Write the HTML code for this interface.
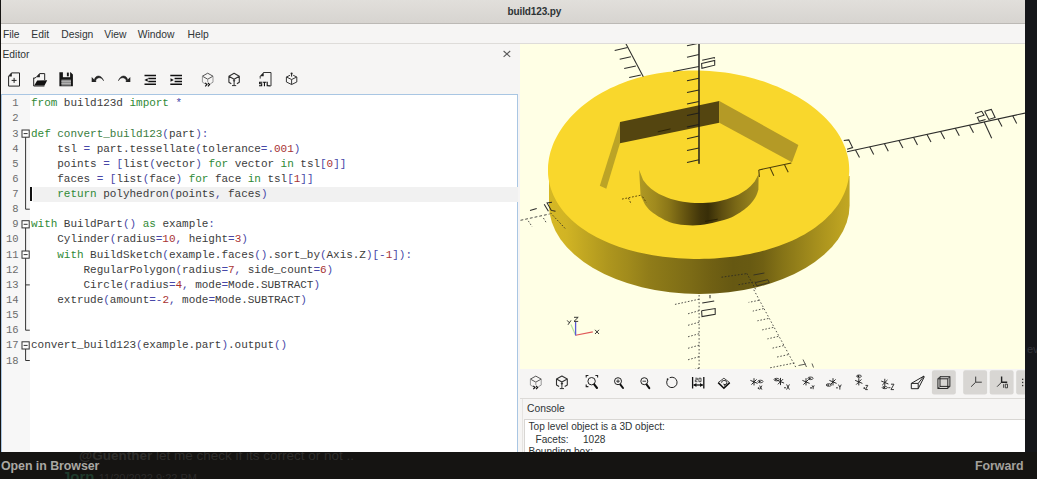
<!DOCTYPE html>
<html><head><meta charset="utf-8">
<style>
html,body{margin:0;padding:0;background:#151412;}
body{width:1037px;height:479px;position:relative;overflow:hidden;font-family:"Liberation Sans",sans-serif;}
.abs{position:absolute;}
#win{left:1px;top:0;width:1024px;height:452px;background:#f6f5f4;overflow:hidden;}
#title{left:0;top:0;width:1024px;height:23px;background:linear-gradient(#e1dfdb,#d7d4d0);border-bottom:1px solid #bcb9b5;}
#title span{position:absolute;left:506.5px;top:5.5px;font-weight:700;font-size:10px;color:#2e3436;letter-spacing:-0.12px;line-height:12px;white-space:pre;}
#menu{left:0;top:24px;width:1024px;height:19px;background:#f6f5f4;border-bottom:1px solid #dedcd9;}
.mi{position:absolute;top:28.5px;font-size:10.3px;line-height:12px;color:#2e3436;white-space:pre;}
#code{left:0;top:94px;width:517px;height:358px;background:#fff;border:1px solid #a9c6e3;border-bottom:none;box-sizing:border-box;}
#gutter{left:1px;top:95px;width:28px;height:357px;background:#f7f7f7;}
.ln{position:absolute;left:0;width:17.5px;text-align:right;font-family:"Liberation Mono",monospace;font-size:10.5px;line-height:15px;color:#6c6c6c;white-space:pre;}
.cl{position:absolute;left:30px;font-family:"Liberation Mono",monospace;font-size:11px;line-height:15px;color:#3c3c3c;white-space:pre;letter-spacing:-0.035px;}
.k{color:#2f8a36;}
.f{color:#3a7d40;}
.o{color:#4848a8;}
.n{color:#a83232;}
#view{left:519px;top:44px;width:505px;height:325px;background:#ffffe5;overflow:hidden;}
#vtb{left:519px;top:369px;width:505px;height:29px;background:#f6f5f4;}
#cons{left:523px;top:419px;width:501px;height:33px;background:#fff;border-top:1px solid #d8d6d3;border-left:1px solid #d8d6d3;}
.ct{position:absolute;font-size:10.1px;line-height:12px;color:#2e3436;white-space:pre;}
#bottom{left:0;top:452px;width:1037px;height:27px;background:#151412;overflow:hidden;}
#right{left:1025px;top:0;width:12px;height:452px;background:#15161a;}
</style></head><body>
<div id="win" class="abs">
<div id="title" class="abs"><span>build123.py</span></div>
<div id="menu" class="abs"></div>
<span class="mi" style="left:2px">File</span>
<span class="mi" style="left:30.3px">Edit</span>
<span class="mi" style="left:60.3px">Design</span>
<span class="mi" style="left:103.3px">View</span>
<span class="mi" style="left:136.8px">Window</span>
<span class="mi" style="left:186.5px">Help</span>
<span class="mi" style="left:1.5px;top:49px">Editor</span>
<!--ICONS-->
<svg width="520" height="50" viewBox="1 44 520 50" style="position:absolute;left:0;top:44px"><path d="M11.6,72.9 L19.5,72.9 L19.5,86.1 L8.6,86.1 L8.6,76.2 Z" fill="none" stroke="#222" stroke-width="1"/><path d="M8.3,76.4 L11.8,72.6 L11.8,76.4 Z" fill="#222"/><path d="M11.6,80.4 h5 M14.1,77.9 v5" stroke="#222" stroke-width="1" fill="none"/>
<path d="M36.6,77 L39.7,73.6 L44.7,73.6 L44.7,80" fill="none" stroke="#222" stroke-width="1"/><path d="M36.2,77.3 L39.9,73.2 L39.9,77.3 Z" fill="#222"/><path d="M33.7,77.6 L33.7,86 L44.4,86" fill="none" stroke="#222" stroke-width="1"/><path d="M36.2,77.3 L33.7,78.5" stroke="#222" stroke-width="1"/><polygon points="37.2,80.6 47.2,80.3 44.5,85.6 34.2,85.6" fill="#111"/>
<path d="M59.4,72.3 L70.6,72.3 L72.9,74.6 L72.9,86.2 L59.4,86.2 Z" fill="#161616"/><rect x="62.9" y="72" width="7.2" height="5.2" fill="#f3f2f1"/><rect x="66.9" y="72.6" width="1.9" height="3.7" fill="#161616"/><rect x="61.4" y="79.6" width="9.6" height="6" fill="#8a8a8a"/><path d="M61.4,81.3 h9.6 M61.4,83.4 h9.6" stroke="#c8c8c8" stroke-width="0.7"/>
<path d="M94.2,80.2 C95.2,74.6 101.6,74.4 103.6,80.8 C101.4,76.6 96.6,76.8 95.6,81 Z" fill="#222" stroke="#222" stroke-width="0.5"/><polygon points="91.7,77 91.7,81.9 96.6,81.9" fill="#222"/>
<path d="M127.8,80.2 C126.8,74.6 120.4,74.4 118.4,80.8 C120.6,76.6 125.4,76.8 126.4,81 Z" fill="#222" stroke="#222" stroke-width="0.5"/><polygon points="130.3,77 130.3,81.9 125.4,81.9" fill="#222"/>
<path d="M144.5,75.6 H156 M148.3,78.5 H156 M148.3,81.4 H156 M144.5,84.3 H156" stroke="#111" stroke-width="1.5" fill="none"/><polygon points="144.4,80 147.7,78.2 147.7,81.8" fill="#111"/>
<path d="M170.3,75.6 H182 M174.6,78.5 H182 M174.6,81.4 H182 M170.3,84.3 H182" stroke="#111" stroke-width="1.5" fill="none"/><polygon points="173.8,80 170.5,78.2 170.5,81.8" fill="#111"/>
<path d="M202.39999999999998,76.2 L207.7,73.2 L213.0,76.2 L207.7,79.2 Z" fill="none" stroke="#444" stroke-width="0.9" stroke-linejoin="round"/><path d="M202.39999999999998,76.2 V82.2 L205.2,83.8 M213.0,76.2 V82.2 L210.29999999999998,83.8 M207.7,79.2 V82.2" fill="none" stroke="#8c8c8c" stroke-width="0.9"/>
<path d="M205.2,82.9 l1.7,1.7 l-1.7,1.7 M207.9,82.9 l1.7,1.7 l-1.7,1.7" fill="none" stroke="#111" stroke-width="1.15"/>
<path d="M228.9,76.2 L234.1,73.2 L239.29999999999998,76.2 L234.1,79.2 Z M228.9,76.2 V82.2 L231.29999999999998,83.7 M239.29999999999998,76.2 V82.2 L236.9,83.7" fill="none" stroke="#303030" stroke-width="1.1" stroke-linejoin="round"/>
<path d="M232.7,80.2 H235.5 L234.1,82.0 Z" fill="#303030"/><path d="M234.1,79.2 V85.4 M232.0,85.60000000000001 H236.2" stroke="#303030" stroke-width="1" fill="none"/>
<path d="M263.4,72.5 H271 V85.9 H268.6" fill="none" stroke="#333" stroke-width="1"/><path d="M259.7,76.2 L263.7,72.1 L263.7,76.2 Z" fill="#222"/><path d="M260.2,76 V78.6" stroke="#333" stroke-width="1"/>
<path d="M262,82.2 H259.6 V83.8 H261.7 V85.8 H259" fill="none" stroke="#111" stroke-width="1.05"/><path d="M262.6,82.2 H266.3 M264.45,82.2 V86.3" fill="none" stroke="#111" stroke-width="1.1"/><path d="M267.2,81.7 V85.8 H269.7" fill="none" stroke="#111" stroke-width="1.1"/>
<path d="M290.0,75.3 L286.40000000000003,77.0 L291.6,79.5 L296.8,77.0 L293.20000000000005,75.3 M286.40000000000003,77.0 V82.0 L291.6,84.5 L296.8,82.0 V77.0 M291.6,79.5 V84.5" fill="none" stroke="#383838" stroke-width="1" stroke-linejoin="round"/>
<path d="M291.6,73.4 V76.6" stroke="#222" stroke-width="1"/><circle cx="291.6" cy="73.5" r="1.05" fill="#222"/>
<path d="M503.6,51 L510.2,56.8 M510.2,51 L503.6,56.8" stroke="#5a5a5a" stroke-width="1.1" fill="none"/></svg>
<!--/ICONS-->
<div id="code" class="abs"></div>
<div id="gutter" class="abs"></div>
<!--CODE-->
<div class="abs" style="left:32px;top:186.9px;width:485px;height:15.2px;background:#f1f1f1"></div><div class="abs" style="left:29.4px;top:186.9px;width:1.6px;height:14.6px;background:#111"></div>
<span class="ln" style="top:96.30px">1</span>
<span class="cl" style="top:96.30px"><span class="k">from</span> build123d <span class="k">import</span> <span class="o">*</span></span>
<span class="ln" style="top:111.43px">2</span>
<span class="ln" style="top:126.56px">3</span>
<span class="cl" style="top:126.56px"><span class="k">def</span> <span class="f">convert_build123</span><span class="o">(</span>part<span class="o">)</span><span class="o">:</span></span>
<span class="ln" style="top:141.69px">4</span>
<span class="cl" style="top:141.69px">    tsl <span class="o">=</span> part.tessellate<span class="o">(</span>tolerance<span class="o">=</span><span class="o">.</span><span class="n">001</span><span class="o">)</span></span>
<span class="ln" style="top:156.82px">5</span>
<span class="cl" style="top:156.82px">    points <span class="o">=</span> <span class="o">[</span>list<span class="o">(</span>vector<span class="o">)</span> <span class="k">for</span> vector <span class="k">in</span> tsl<span class="o">[</span><span class="n">0</span><span class="o">]</span><span class="o">]</span></span>
<span class="ln" style="top:171.95px">6</span>
<span class="cl" style="top:171.95px">    faces <span class="o">=</span> <span class="o">[</span>list<span class="o">(</span>face<span class="o">)</span> <span class="k">for</span> face <span class="k">in</span> tsl<span class="o">[</span><span class="n">1</span><span class="o">]</span><span class="o">]</span></span>
<span class="ln" style="top:187.08px">7</span>
<span class="cl" style="top:187.08px">    <span class="k">return</span> polyhedron<span class="o">(</span>points<span class="o">,</span> faces<span class="o">)</span></span>
<span class="ln" style="top:202.21px">8</span>
<span class="ln" style="top:217.34px">9</span>
<span class="cl" style="top:217.34px"><span class="k">with</span> BuildPart<span class="o">(</span><span class="o">)</span> <span class="k">as</span> example<span class="o">:</span></span>
<span class="ln" style="top:232.47px">10</span>
<span class="cl" style="top:232.47px">    Cylinder<span class="o">(</span>radius<span class="o">=</span><span class="n">10</span><span class="o">,</span> height<span class="o">=</span><span class="n">3</span><span class="o">)</span></span>
<span class="ln" style="top:247.60px">11</span>
<span class="cl" style="top:247.60px">    <span class="k">with</span> BuildSketch<span class="o">(</span>example.faces<span class="o">(</span><span class="o">)</span>.sort_by<span class="o">(</span>Axis.Z<span class="o">)</span><span class="o">[</span><span class="o">-</span><span class="n">1</span><span class="o">]</span><span class="o">)</span><span class="o">:</span></span>
<span class="ln" style="top:262.73px">12</span>
<span class="cl" style="top:262.73px">        RegularPolygon<span class="o">(</span>radius<span class="o">=</span><span class="n">7</span><span class="o">,</span> side_count<span class="o">=</span><span class="n">6</span><span class="o">)</span></span>
<span class="ln" style="top:277.86px">13</span>
<span class="cl" style="top:277.86px">        Circle<span class="o">(</span>radius<span class="o">=</span><span class="n">4</span><span class="o">,</span> mode<span class="o">=</span>Mode.SUBTRACT<span class="o">)</span></span>
<span class="ln" style="top:292.99px">14</span>
<span class="cl" style="top:292.99px">    extrude<span class="o">(</span>amount<span class="o">=</span><span class="o">-</span><span class="n">2</span><span class="o">,</span> mode<span class="o">=</span>Mode.SUBTRACT<span class="o">)</span></span>
<span class="ln" style="top:308.12px">15</span>
<span class="ln" style="top:323.25px">16</span>
<span class="ln" style="top:338.38px">17</span>
<span class="cl" style="top:338.38px">convert_build123<span class="o">(</span>example.part<span class="o">)</span>.output<span class="o">(</span><span class="o">)</span></span>
<span class="ln" style="top:353.51px">18</span>
<svg width="34" height="358" viewBox="1 94 34 358" style="position:absolute;left:0;top:94px" fill="none"><path d="M25.6,133.6 V209.2" stroke="#333" stroke-width="1"/><path d="M25.6,209.2 H29.8" stroke="#333" stroke-width="1"/><rect x="22.0" y="130.0" width="7.2" height="7.2" fill="#fff" stroke="#333" stroke-width="1"/><path d="M23.6,133.6 H27.6" stroke="#333" stroke-width="1"/><path d="M25.6,224.3 V330.2" stroke="#333" stroke-width="1"/><path d="M25.6,330.2 H29.8" stroke="#333" stroke-width="1"/><path d="M25.6,284.9 H29.8" stroke="#333" stroke-width="1"/><rect x="22.0" y="220.7" width="7.2" height="7.2" fill="#fff" stroke="#333" stroke-width="1"/><path d="M23.6,224.3 H27.6" stroke="#333" stroke-width="1"/><rect x="22.0" y="251.0" width="7.2" height="7.2" fill="#fff" stroke="#333" stroke-width="1"/><path d="M23.6,254.6 H27.6" stroke="#333" stroke-width="1"/><path d="M25.6,345.4 V360.5" stroke="#333" stroke-width="1"/><path d="M25.6,360.5 H29.8" stroke="#333" stroke-width="1"/><rect x="22.0" y="341.8" width="7.2" height="7.2" fill="#fff" stroke="#333" stroke-width="1"/><path d="M23.6,345.4 H27.6" stroke="#333" stroke-width="1"/></svg>
<!--/CODE-->
<div id="view" class="abs">
<!--SVG-->
<svg width="505" height="325" viewBox="520 44 505 325" style="position:absolute;left:0;top:0"><defs><linearGradient id="gs" gradientUnits="userSpaceOnUse" x1="549" y1="0" x2="849.6" y2="0"><stop offset="0.0000" stop-color="#d6b825"/><stop offset="0.0566" stop-color="#d1b424"/><stop offset="0.1264" stop-color="#bfa521"/><stop offset="0.1963" stop-color="#ae961e"/><stop offset="0.2628" stop-color="#a18b1c"/><stop offset="0.3327" stop-color="#907c19"/><stop offset="0.4025" stop-color="#867417"/><stop offset="0.4724" stop-color="#7c6b16"/><stop offset="0.5422" stop-color="#706013"/><stop offset="0.6121" stop-color="#665812"/><stop offset="0.6687" stop-color="#685a12"/><stop offset="0.7119" stop-color="#706013"/><stop offset="0.7784" stop-color="#867417"/><stop offset="0.8483" stop-color="#9a851b"/><stop offset="0.9182" stop-color="#ae961e"/><stop offset="0.9747" stop-color="#bda321"/><stop offset="1.0000" stop-color="#c2a722"/></linearGradient><linearGradient id="gb" gradientUnits="userSpaceOnUse" x1="639" y1="0" x2="759" y2="0"><stop offset="0.0000" stop-color="#b09a24"/><stop offset="0.1333" stop-color="#a08a1e"/><stop offset="0.2500" stop-color="#8a7618"/><stop offset="0.4167" stop-color="#5c4c0e"/><stop offset="0.5083" stop-color="#42360a"/><stop offset="0.5750" stop-color="#382e08"/><stop offset="0.6917" stop-color="#5e4e10"/><stop offset="0.8083" stop-color="#7a6816"/><stop offset="0.9167" stop-color="#8f7c1c"/><stop offset="1.0000" stop-color="#9c8820"/></linearGradient></defs>
<path fill="url(#gs)" d="M549,176 L549,205.2 A150.3,88.86 0 0 0 849.6,205.2 L849.6,176 Z"/>
<path fill="#f9d72c" d="M849.0,165.0 L849.2,168.3 L849.2,171.7 L849.0,175.0 L848.6,178.4 L848.0,181.7 L847.2,185.0 L846.2,188.3 L845.0,191.6 L843.6,194.8 L842.0,198.1 L840.2,201.2 L838.2,204.4 L836.0,207.5 L833.6,210.5 L831.1,213.4 L828.3,216.3 L825.4,219.2 L822.3,221.9 L819.0,224.6 L815.6,227.2 L812.0,229.7 L808.3,232.0 L804.4,234.4 L800.4,236.6 L796.3,238.7 L792.0,240.7 L787.7,242.6 L783.2,244.3 L778.7,246.0 L774.1,247.6 L769.3,249.1 L764.6,250.4 L759.7,251.7 L754.9,252.8 L749.9,253.9 L744.9,254.8 L739.9,255.7 L734.9,256.4 L729.8,257.1 L724.7,257.6 L719.6,258.1 L714.5,258.4 L709.3,258.7 L704.2,258.8 L699.0,258.9 L693.8,258.9 L688.7,258.8 L683.5,258.6 L678.4,258.3 L673.2,257.8 L668.1,257.3 L663.0,256.7 L657.9,256.0 L652.9,255.2 L647.8,254.3 L642.8,253.3 L637.9,252.2 L633.0,251.0 L628.2,249.7 L623.4,248.2 L618.7,246.7 L614.1,245.0 L609.6,243.2 L605.1,241.3 L600.8,239.3 L596.6,237.2 L592.6,235.0 L588.6,232.7 L584.9,230.3 L581.2,227.8 L577.8,225.2 L574.5,222.5 L571.4,219.7 L568.4,216.8 L565.7,213.9 L563.1,210.9 L560.7,207.8 L558.6,204.7 L556.6,201.6 L554.9,198.3 L553.3,195.1 L552.0,191.8 L550.8,188.5 L549.8,185.1 L549.1,181.8 L548.5,178.4 L548.1,175.1 L548.0,171.7 L548.0,168.4 L548.1,165.0 L548.5,161.7 L549.0,158.3 L549.7,155.0 L550.5,151.8 L551.6,148.5 L552.7,145.3 L554.0,142.1 L555.5,139.0 L557.1,135.9 L558.9,132.8 L560.8,129.7 L562.8,126.7 L565.0,123.8 L567.3,120.9 L569.8,118.0 L572.4,115.2 L575.2,112.4 L578.1,109.7 L581.1,107.0 L584.3,104.4 L587.6,101.9 L591.0,99.5 L594.6,97.1 L598.3,94.8 L602.2,92.5 L606.1,90.4 L610.2,88.3 L614.5,86.4 L618.8,84.5 L623.3,82.8 L627.8,81.1 L632.5,79.6 L637.3,78.1 L642.1,76.8 L647.0,75.6 L652.0,74.5 L657.1,73.6 L662.2,72.7 L667.4,72.0 L672.6,71.5 L677.9,71.0 L683.2,70.7 L688.4,70.5 L693.7,70.4 L699.0,70.5 L704.3,70.7 L709.5,71.0 L714.7,71.4 L719.9,71.9 L725.1,72.6 L730.1,73.3 L735.2,74.2 L740.2,75.2 L745.1,76.3 L749.9,77.5 L754.6,78.8 L759.3,80.2 L763.9,81.6 L768.4,83.2 L772.8,84.9 L777.1,86.6 L781.4,88.4 L785.5,90.4 L789.5,92.3 L793.4,94.4 L797.2,96.5 L800.9,98.7 L804.5,101.0 L807.9,103.3 L811.3,105.8 L814.5,108.2 L817.6,110.8 L820.6,113.4 L823.4,116.0 L826.2,118.7 L828.7,121.5 L831.2,124.3 L833.5,127.2 L835.7,130.1 L837.7,133.1 L839.6,136.1 L841.3,139.2 L842.8,142.3 L844.2,145.4 L845.5,148.6 L846.5,151.9 L847.4,155.1 L848.2,158.4 L848.7,161.7Z"/>
<polygon fill="#bca426" points="620,122 620,143.3 606.3,188.7 599.8,185.8"/>
<polygon fill="#544510" points="620,122 719.3,100.9 719.3,122.8 620,143.3"/>
<polygon fill="#b49a26" points="719.3,100.9 798.4,144.9 792,162.2 719.3,122.8"/>
<path fill="url(#gb)" d="M758.7,170.5 L758.4,189.8C757.9,191.1 757.1,194.7 755.3,197.6C753.5,200.5 751.3,203.7 747.4,207.0C743.5,210.3 737.0,214.7 731.8,217.2C726.6,219.7 721.3,220.6 716.1,221.9C710.9,223.2 705.7,224.5 700.5,225.0C695.3,225.5 690.0,225.5 684.8,225.0C679.6,224.5 674.3,223.9 669.1,221.9C663.9,219.9 657.4,215.9 653.5,213.2C649.6,210.4 647.9,208.4 645.7,205.4C643.6,202.4 641.5,196.9 640.6,195.2 L639.1,169.8 L643.1,180.1 L647.1,185.1 L651.1,188.7 L655.0,191.5 L659.0,193.9 L663.0,195.8 L667.0,197.5 L671.0,198.9 L675.0,200.0 L679.0,201.0 L683.0,201.7 L686.9,202.3 L690.9,202.7 L694.9,203.0 L698.9,203.1 L702.9,203.0 L706.9,202.8 L710.9,202.4 L714.8,201.9 L718.8,201.2 L722.8,200.3 L726.8,199.2 L730.8,197.8 L734.8,196.3 L738.8,194.4 L742.8,192.1 L746.7,189.4 L750.7,186.1 L754.7,181.6 L758.7,174.1 Z"/>
<!--AXES-->
<g stroke="#1c1c1c" stroke-width="1.05" fill="none" stroke-linecap="butt" opacity="0.92">
<line x1="699.0" y1="44" x2="699.0" y2="163.7" stroke-width="1.1"/>
<line x1="699.0" y1="44.0" x2="699.0" y2="163.7"/>
<line x1="699.0" y1="43.2" x2="687.0" y2="45.8"/>
<line x1="699.0" y1="54.6" x2="687.0" y2="57.2"/>
<line x1="699.0" y1="78.2" x2="687.0" y2="80.8"/>
<line x1="699.0" y1="90.0" x2="687.0" y2="92.6"/>
<line x1="699.0" y1="101.4" x2="687.0" y2="104.0"/>
<line x1="699.0" y1="113.0" x2="687.0" y2="115.6"/>
<line x1="699.0" y1="124.4" x2="687.0" y2="127.0"/>
<line x1="699.0" y1="136.1" x2="687.0" y2="138.7"/>
<line x1="699.0" y1="148.0" x2="687.0" y2="150.6"/>
<line x1="699.0" y1="159.8" x2="687.0" y2="162.4"/>
<line x1="699.0" y1="66.6" x2="673.2" y2="71.4"/>
<line x1="702.2" y1="60.2" x2="714.7" y2="57.4"/>
<line x1="714.7" y1="57.4" x2="714.1" y2="58.4"/>
<line x1="625.9" y1="43.7" x2="643.3" y2="76.8"/>
<line x1="627.6" y1="47.5" x2="614.7" y2="50.4"/>
<line x1="630.9" y1="56.7" x2="619.7" y2="59.2"/>
<line x1="635.9" y1="65.9" x2="624.2" y2="68.4"/>
<line x1="640.9" y1="75.0" x2="629.2" y2="77.6"/>
<line x1="847.1" y1="151.7" x2="1025.5" y2="113.0"/>
<line x1="855.5" y1="149.9" x2="859.5" y2="157.5"/>
<line x1="869.7" y1="146.8" x2="873.7" y2="154.4"/>
<line x1="884.3" y1="143.6" x2="888.3" y2="151.2"/>
<line x1="898.9" y1="140.5" x2="902.9" y2="148.1"/>
<line x1="913.5" y1="137.3" x2="917.5" y2="144.9"/>
<line x1="927.0" y1="134.4" x2="931.0" y2="142.0"/>
<line x1="940.6" y1="131.4" x2="944.6" y2="139.0"/>
<line x1="955.3" y1="128.2" x2="959.3" y2="135.8"/>
<line x1="969.5" y1="125.2" x2="973.5" y2="132.8"/>
<line x1="998.0" y1="119.0" x2="1002.0" y2="126.6"/>
<line x1="1012.7" y1="115.8" x2="1016.7" y2="123.4"/>
<line x1="984.2" y1="122.0" x2="991.7" y2="138.2"/>
<polygon points="701.6,63.6 714.7,60.5 714.7,65.2 701.9,68.3"/>
<polyline points="975.0,113.4 981.7,111.3 984.0,115.2 977.4,117.3 979.2,121.3 985.6,119.5"/>
<polyline points="984.6,111.3 991.3,109.4 995.1,117.5 988.8,119.4 984.6,111.3"/>
<polyline points="843.8,140.5 848.8,139.9 852.6,147.6 847.1,149.2"/>
<polyline points="530.0,210.4 536.7,208.4"/>
<polyline points="544.2,204.2 548.4,211.3"/>
<polyline points="552.0,202.3 547.1,202.9 551.3,210.4 555.5,211.3"/>
<polyline points="710.0,295.0 710.0,298.3"/>
<polyline points="702.2,303.0 714.2,300.9"/>
<polyline points="701.6,310.7 715.2,308.6 715.2,314.3 702.0,316.6 701.6,310.7"/>
</g>
<g stroke="#3a2e06" stroke-width="1.05" fill="none" opacity="0.9">
<line x1="758.8" y1="170.0" x2="791.3" y2="162.9"/>
<line x1="770.0" y1="167.6" x2="773.8" y2="175.7"/>
<line x1="784.4" y1="164.5" x2="788.2" y2="172.3"/>
<line x1="758.8" y1="170.0" x2="759.4" y2="177.0"/>
</g>
<g stroke="#241c04" stroke-width="1" fill="none" opacity="0.8"><line x1="657.8" y1="131.8" x2="670.5" y2="128.9"/><line x1="705" y1="221.4" x2="717.7" y2="219.2"/></g>
<g stroke="#4a3806" stroke-width="1" fill="none" opacity="0.85" stroke-dasharray="1.8 1.6"><line x1="622" y1="199.1" x2="641.8" y2="195"/><line x1="628.4" y1="198" x2="631.3" y2="204.2"/><line x1="642.6" y1="196.7" x2="646.4" y2="202.6"/></g>
<g stroke="#262626" stroke-width="1" fill="none" opacity="0.8" stroke-dasharray="1.5 2.1">
<line x1="520.5" y1="220.3" x2="549.6" y2="214" stroke-dasharray="2.8 2"/>
<line x1="699.1" y1="295.0" x2="699.1" y2="369.0"/>
<line x1="753.8" y1="289.8" x2="796.2" y2="368.0"/>
</g><g stroke="#262626" stroke-width="1" fill="none" opacity="0.78" stroke-dasharray="1.6 1.7">
<line x1="528.3" y1="220.9" x2="532.1" y2="226.7"/>
<line x1="543.4" y1="218.0" x2="546.7" y2="223.4"/>
<line x1="550.5" y1="212.9" x2="565.1" y2="228.4"/>
<line x1="699.1" y1="299.2" x2="674.5" y2="304.5"/>
<line x1="699.1" y1="310.7" x2="687.6" y2="313.9"/>
<line x1="699.1" y1="322.2" x2="687.6" y2="325.4"/>
<line x1="699.1" y1="333.7" x2="687.6" y2="336.9"/>
<line x1="699.1" y1="345.2" x2="687.6" y2="348.4"/>
<line x1="699.1" y1="356.7" x2="687.6" y2="359.9"/>
<line x1="699.1" y1="368.2" x2="687.6" y2="371.4"/>
<line x1="759.0" y1="300.3" x2="748.6" y2="302.4"/>
<line x1="763.6" y1="308.6" x2="752.8" y2="311.1"/>
<line x1="768.4" y1="318.5" x2="757.4" y2="320.8"/>
<line x1="773.3" y1="327.4" x2="762.2" y2="329.9"/>
<line x1="778.3" y1="336.4" x2="767.4" y2="338.9"/>
<line x1="783.7" y1="345.6" x2="772.6" y2="348.1"/>
<line x1="788.3" y1="354.6" x2="776.8" y2="357.1"/>
<line x1="794.4" y1="363.0" x2="769.0" y2="368.0"/>
<line x1="721.5" y1="277.2" x2="747.0" y2="273.6"/>
<line x1="746.8" y1="273.4" x2="756.0" y2="290.0"/>
<line x1="738.5" y1="284.7" x2="755.2" y2="281.7"/>
</g><g stroke="#262626" stroke-width="1" fill="none" opacity="0.75">
<polyline points="753.5,275.0 764.4,273.0"/>
<polyline points="755.2,282.6 767.7,279.7 769.4,282.6 756.9,285.9 755.2,282.6"/>
<polyline points="798.5,365.5 806.0,364.0"/>
<polyline points="803.0,359.5 806.5,367.0"/>
<polyline points="812.0,363.5 813.5,367.5"/>
</g>
<g fill="none" stroke-width="1.1"><line x1="575.6" y1="335.3" x2="592.8" y2="331.9" stroke="#e05858"/><line x1="575.6" y1="335.3" x2="570.9" y2="324.5" stroke="#9fd88f" opacity="0.8"/><line x1="575.6" y1="335.5" x2="575.6" y2="321.8" stroke="#5a5ad8" stroke-width="1.3"/></g>
<g fill="none" stroke="#222" stroke-width="0.9"><path d="M574,317.3 H578.2 L574,321.4 H578.2"/><path d="M595,329.8 L599,334 M599,329.8 L595,334"/><path d="M567.2,320.4 L569.2,322.7 M571,320.4 L568,324.8"/></g>
<!--/AXES-->
</svg>
<!--/SVG-->
</div>
<div id="vtb" class="abs"></div><div class="abs" style="left:519px;top:398px;width:505px;height:1px;background:#dcdad7"></div>
<!--ICONS2-->
<svg width="505" height="29" viewBox="520 369 505 29" style="position:absolute;left:519px;top:369px"><rect x="931.9" y="370.2" width="23.9" height="24.2" rx="2.2" fill="#d8d6d3"/>
<rect x="963.2" y="370.2" width="23.9" height="24.2" rx="2.2" fill="#d8d6d3"/>
<rect x="989.7" y="370.2" width="23.9" height="24.2" rx="2.2" fill="#d8d6d3"/>
<rect x="1016.2" y="370.2" width="13.8" height="24.2" rx="2.2" fill="#d8d6d3"/>
<path d="M530.4,379.1 L535.8,376.1 L541.1999999999999,379.1 L535.8,382.1 Z" fill="none" stroke="#444" stroke-width="0.9" stroke-linejoin="round"/><path d="M530.4,379.1 V385.1 L533.3,386.70000000000005 M541.1999999999999,379.1 V385.1 L538.4,386.70000000000005 M535.8,382.1 V385.1" fill="none" stroke="#8c8c8c" stroke-width="0.9"/>
<path d="M533.3,385.8 l1.7,1.7 l-1.7,1.7 M536,385.8 l1.7,1.7 l-1.7,1.7" fill="none" stroke="#111" stroke-width="1.15"/>
<path d="M556.5,379.1 L561.9,376.1 L567.3,379.1 L561.9,382.1 Z M556.5,379.1 V385.1 L559.1,386.6 M567.3,379.1 V385.1 L564.6999999999999,386.6" fill="none" stroke="#303030" stroke-width="1.1" stroke-linejoin="round"/>
<path d="M560.5,383.1 H563.3 L561.9,384.90000000000003 Z" fill="#303030"/><path d="M561.9,382.1 V388.3 M559.8,388.6 H564.0" stroke="#303030" stroke-width="1" fill="none"/>
<circle cx="591.6" cy="381.2" r="3.7" fill="none" stroke="#222" stroke-width="1"/><path d="M594.2,384.4 L597,388" stroke="#111" stroke-width="2.1" stroke-linecap="round"/>
<path d="M586.2,377.6 V375.5 H588.4 M595.4,375.5 H597.6 V377.6 M586.2,384.4 V386.6 H588.4" fill="none" stroke="#222" stroke-width="1.1"/>
<circle cx="618" cy="381.2" r="3.5" fill="none" stroke="#222" stroke-width="1"/><path d="M620.4,384.6 L623,388" stroke="#111" stroke-width="2" stroke-linecap="round"/><path d="M616.2,381.2 h3.6 M618,379.4 v3.6" stroke="#222" stroke-width="0.9"/>
<circle cx="644.3" cy="381.2" r="3.5" fill="none" stroke="#222" stroke-width="1"/><path d="M646.7,384.6 L649.3,388.2" stroke="#111" stroke-width="2" stroke-linecap="round"/><path d="M642.5,381.2 h3.6" stroke="#222" stroke-width="0.9"/>
<path d="M669.7,377.7 A5.2,5.2 0 1 1 667.4,379.8" fill="none" stroke="#222" stroke-width="1"/><circle cx="667.6" cy="379.2" r="0.9" fill="#222"/>
<path d="M692.6,377 V388.4 M703.8,377 V388.4" stroke="#111" stroke-width="1.3"/><path d="M693.6,385 H702.8" stroke="#111" stroke-width="1.3"/><path d="M696.4,383 L693.4,385 L696.4,387 Z M700,383 L703,385 L700,387 Z" fill="#111"/>
<path d="M695.3,378.2 H697.3 V379.9 H695.3 V381.7 H697.4 M698.9,378.2 H701 V381.7 H698.9 Z" fill="none" stroke="#222" stroke-width="0.8"/>
<path d="M718.2,382.6 L723.9,388.2 L729.7,382.6" fill="none" stroke="#111" stroke-width="1.6" stroke-linejoin="miter"/><path d="M718.2,382.6 L723.9,378.2 L729.7,382.6" fill="none" stroke="#333" stroke-width="0.9"/><path d="M721.6,382.8 A2.6,2.2 0 1 1 724.4,384.8" fill="none" stroke="#222" stroke-width="0.9"/><path d="M723.2,383.6 L725.6,384.4 L724.2,386 Z" fill="#222"/>
<path d="M754,378.2 V385.40000000000003 M750.4,380.40000000000003 L757.6,383.40000000000003 M751.4,384.6 L756.6,379.40000000000003" stroke="#222" stroke-width="0.95" fill="none"/>
<ellipse cx="760.4" cy="381.5" rx="2.6" ry="1.3" fill="none" stroke="#222" stroke-width="0.8"/><circle cx="759.8" cy="381.5" r="0.85" fill="#111"/>
<path d="M757.7,388.20000000000005 h1.7600000000000002 M758.58,387.32000000000005 v1.7600000000000002" stroke="#222" stroke-width="0.8" fill="none"/><path d="M759.6800000000001,385.6 L761.8800000000001,389.6 M761.8800000000001,385.6 L759.6800000000001,389.6" stroke="#222" stroke-width="0.9" fill="none"/>
<path d="M780.5,377.9 V385.1 M776.9,380.1 L784.1,383.1 M777.9,384.3 L783.1,379.1" stroke="#222" stroke-width="0.95" fill="none"/>
<ellipse cx="776.6" cy="379.6" rx="2.6" ry="1.3" fill="none" stroke="#222" stroke-width="0.8"/><circle cx="776.0" cy="379.6" r="0.85" fill="#111"/>
<path d="M784,387.78000000000003 h2.0020000000000002" stroke="#222" stroke-width="0.9" fill="none"/><path d="M786.574,384.40000000000003 L789.434,389.6 M789.434,384.40000000000003 L786.574,389.6" stroke="#222" stroke-width="0.9" fill="none"/>
<path d="M806,378.2 V385.40000000000003 M802.4,380.40000000000003 L809.6,383.40000000000003 M803.4,384.6 L808.6,379.40000000000003" stroke="#222" stroke-width="0.95" fill="none"/>
<ellipse cx="810.5" cy="378.3" rx="2.6" ry="1.3" fill="none" stroke="#222" stroke-width="0.8"/><circle cx="809.9" cy="378.3" r="0.85" fill="#111"/>
<path d="M810.2,387.87 h1.672 M811.0360000000001,387.034 v1.672" stroke="#222" stroke-width="0.8" fill="none"/><path d="M812.081,385.4 L813.126,387.49 L814.171,385.4 M813.126,387.49 V389.2" stroke="#222" stroke-width="0.9" fill="none"/>
<path d="M833,378.2 V385.40000000000003 M829.4,380.40000000000003 L836.6,383.40000000000003 M830.4,384.6 L835.6,379.40000000000003" stroke="#222" stroke-width="0.95" fill="none"/>
<ellipse cx="828.8" cy="385" rx="2.6" ry="1.3" fill="none" stroke="#222" stroke-width="0.8"/><circle cx="828.1999999999999" cy="385" r="0.85" fill="#111"/>
<path d="M836,387.85 h1.9249999999999998" stroke="#222" stroke-width="0.9" fill="none"/><path d="M838.475,384.6 L839.85,387.35 L841.225,384.6 M839.85,387.35 V389.6" stroke="#222" stroke-width="0.9" fill="none"/>
<path d="M858.8,378.2 V385.40000000000003 M855.1999999999999,380.40000000000003 L862.4,383.40000000000003 M856.1999999999999,384.6 L861.4,379.40000000000003" stroke="#222" stroke-width="0.95" fill="none"/>
<ellipse cx="859" cy="376.2" rx="2.4" ry="1.2" fill="none" stroke="#222" stroke-width="0.8"/><circle cx="858.4" cy="376.2" r="0.85" fill="#111"/>
<path d="M863.4,388.13 h1.8480000000000005 M864.324,387.206 v1.8480000000000005" stroke="#222" stroke-width="0.8" fill="none"/><path d="M865.4789999999999,385.40000000000003 H867.7889999999999 L865.4789999999999,389.6 H867.7889999999999" stroke="#222" stroke-width="0.9" fill="none"/>
<path d="M884.8,378.79999999999995 V386.0 M881.1999999999999,381.0 L888.4,384.0 M882.1999999999999,385.2 L887.4,380.0" stroke="#222" stroke-width="0.95" fill="none"/>
<ellipse cx="884.8" cy="387.6" rx="2.6" ry="1.1" fill="none" stroke="#222" stroke-width="0.8"/><circle cx="884.1999999999999" cy="387.6" r="0.85" fill="#111"/>
<path d="M888.3,387.71000000000004 h2.079" stroke="#222" stroke-width="0.9" fill="none"/><path d="M890.973,384.20000000000005 H893.943 L890.973,389.6 H893.943" stroke="#222" stroke-width="0.9" fill="none"/>
<path d="M911.3,383.4 H918.2 V388.7 H911.3 Z M911.3,383.4 L924,376 L918.2,383.4 M918.2,388.7 L924.4,376.6" fill="none" stroke="#222" stroke-width="1" stroke-linejoin="round"/>
<path d="M937.9,378.8 H947.8 V388.5 H937.9 Z M940,376.7 H949.9 V386.4 H940 Z M937.9,378.8 L940,376.7 M947.8,378.8 L949.9,376.7 M947.8,388.5 L949.9,386.4 M937.9,388.5 L940,386.4" fill="none" stroke="#222" stroke-width="0.95" stroke-linejoin="round"/>
<path d="M975.7,376.6 V382.2 H981.8 M975.7,382.2 L971.1,386.7" fill="none" stroke="#333" stroke-width="0.95"/>
<path d="M1001.6,376.6 V382.2 H1007.2" fill="none" stroke="#222" stroke-width="1.4"/><path d="M1001.6,382.2 L997.1,386.7" stroke="#333" stroke-width="0.95"/><path d="M1003.6,384.2 V387.8 M1005.3,384.2 H1007.5 V387.8 H1005.3 Z" fill="none" stroke="#222" stroke-width="0.8"/>
<rect x="1022" y="378.7" width="1.3" height="1.3" fill="#333"/><rect x="1022" y="381.8" width="1.3" height="1.3" fill="#333"/><rect x="1022" y="384.9" width="1.3" height="1.3" fill="#333"/></svg>
<!--/ICONS2-->
<span class="mi" style="left:526px;top:403px">Console</span>
<div class="abs" style="left:521px;top:399px;width:1px;height:53px;background:#e6e4e1"></div><div id="cons" class="abs"></div>
<span class="ct" style="left:527.5px;top:421px">Top level object is a 3D object:</span>
<span class="ct" style="left:534.5px;top:433.7px">Facets:</span>
<span class="ct" style="left:582px;top:433.7px">1028</span>
<span class="ct" style="left:527.5px;top:446.4px">Bounding box:</span>
</div>
<div id="right" class="abs"></div>
<div id="bottom" class="abs">
<span style="position:absolute;left:79px;top:-4px;font-size:13.5px;color:#2f2e2c;white-space:pre;line-height:16px"><b style="font-weight:700">@Guenther</b> let me check if its correct or not ..</span>
<span style="position:absolute;left:62px;top:17px;font-size:15px;color:#1f3a2c;white-space:pre;line-height:16px;font-weight:700">Jorn <span style="color:#2b2a29;font-weight:400;font-size:11px">11/20/2022 9:22 PM</span></span>
<span style="position:absolute;left:1px;top:6px;font-size:12.4px;font-weight:700;color:#aaa8a3;white-space:pre;line-height:16px;letter-spacing:-0.05px">Open in Browser</span>
<span style="position:absolute;left:975px;top:6px;font-size:12.4px;font-weight:700;color:#a3a19d;white-space:pre;line-height:16px;letter-spacing:-0.05px">Forward</span>
</div>
<span style="position:absolute;left:1027px;top:343px;font-size:11px;color:#34353a;white-space:pre">ev</span>
</body></html>
